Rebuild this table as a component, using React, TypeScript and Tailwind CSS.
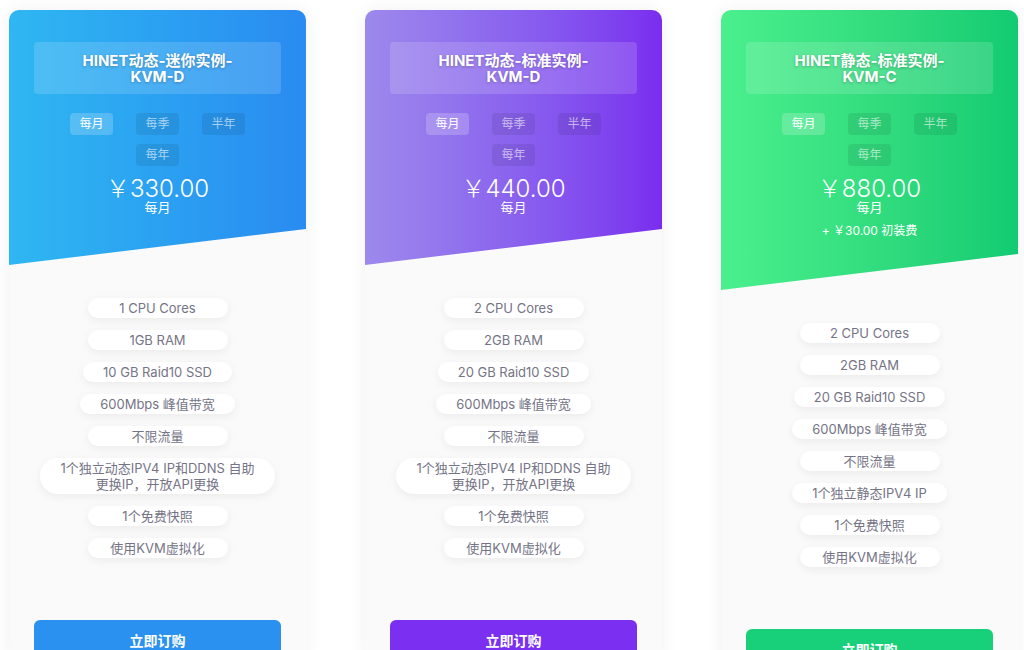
import React from 'react';

type Plan = {
  title: [string, string];
  price: string;
  setup?: string;
  from: string;
  to: string;
  btn: string;
  features: string[][];
};

const plans: Plan[] = [
  {
    title: ['HINET动态-迷你实例-', 'KVM-D'],
    price: '330.00',
    from: 'from-[#2fb7f2]',
    to: 'to-[#2a8bf0]',
    btn: 'bg-[#2b91f0]',
    features: [
      ['1 CPU Cores'],
      ['1GB RAM'],
      ['10 GB Raid10 SSD'],
      ['600Mbps 峰值带宽'],
      ['不限流量'],
      ['1个独立动态IPV4 IP和DDNS 自助', '更换IP，开放API更换'],
      ['1个免费快照'],
      ['使用KVM虚拟化'],
    ],
  },
  {
    title: ['HINET动态-标准实例-', 'KVM-D'],
    price: '440.00',
    from: 'from-[#9d89ec]',
    to: 'to-[#7a2cef]',
    btn: 'bg-[#7b2ff0]',
    features: [
      ['2 CPU Cores'],
      ['2GB RAM'],
      ['20 GB Raid10 SSD'],
      ['600Mbps 峰值带宽'],
      ['不限流量'],
      ['1个独立动态IPV4 IP和DDNS 自助', '更换IP，开放API更换'],
      ['1个免费快照'],
      ['使用KVM虚拟化'],
    ],
  },
  {
    title: ['HINET静态-标准实例-', 'KVM-C'],
    price: '880.00',
    setup: '+ ￥30.00 初装费',
    from: 'from-[#4af08c]',
    to: 'to-[#11cb72]',
    btn: 'bg-[#19d07a]',
    features: [
      ['2 CPU Cores'],
      ['2GB RAM'],
      ['20 GB Raid10 SSD'],
      ['600Mbps 峰值带宽'],
      ['不限流量'],
      ['1个独立静态IPV4 IP'],
      ['1个免费快照'],
      ['使用KVM虚拟化'],
    ],
  },
];

const periods = ['每月', '每季', '半年', '每年'];

function PlanCard({ plan }: { plan: Plan }) {
  return (
    <div className="w-[297px] shrink-0 rounded-t-[10px] overflow-hidden bg-[#fafafa] shadow-[0_0_18px_rgba(0,0,0,0.06)]">
      {/* Header */}
      <div
        className={`bg-linear-to-r ${plan.from} ${plan.to} px-[25px] pt-[32px] pb-[51px] [clip-path:polygon(0_0,100%_0,100%_calc(100%_-_36px),0_100%)]`}
      >
        <div className="rounded-[4px] bg-white/15 pt-[11px] pb-[9px] text-center text-[15px] font-bold leading-[16px] text-white [text-shadow:0_1px_3px_rgba(0,0,0,0.25)]">
          <div>{plan.title[0]}</div>
          <div>{plan.title[1]}</div>
        </div>
        <div className="mx-auto mt-[19px] flex w-[200px] flex-wrap justify-center gap-x-[23px] gap-y-[9px]">
          {periods.map((p, i) => (
            <div
              key={p}
              className={`flex h-[22px] w-[43px] items-center justify-center rounded-[4px] text-[12px] ${
                i === 0 ? 'bg-white/20 text-white' : 'bg-black/[0.08] text-white/60'
              }`}
            >
              {p}
            </div>
          ))}
        </div>
        <div className="mt-[12px] text-center text-[24px] font-light leading-[22px] text-white">
          ￥{plan.price}
        </div>
        <div className="text-center text-[13px] leading-[14px] text-white">每月</div>
        {plan.setup && (
          <div className="mt-[9px] text-center text-[12px] leading-[16px] text-white">{plan.setup}</div>
        )}
      </div>

      {/* Features */}
      <div className="flex flex-col items-center gap-[12px] pt-[33px]">
        {plan.features.map((f, i) => (
          <div
            key={i}
            className="min-w-[140px] rounded-full bg-white px-[20px] py-[2px] text-center text-[13px] leading-[16px] text-[#757486] shadow-[0_3px_10px_rgba(0,0,0,0.06)]"
          >
            {f.map((line) => (
              <div key={line} className="whitespace-nowrap">
                {line}
              </div>
            ))}
          </div>
        ))}
      </div>

      {/* Button */}
      <div className="px-[25px] pt-[62px]">
        <button className={`h-[40px] w-full rounded-[6px] ${plan.btn} text-[14px] font-bold text-white`}>
          立即订购
        </button>
      </div>
    </div>
  );
}

export default function App() {
  return (
    <div
      className="h-[650px] overflow-hidden bg-white"
      style={{ fontFamily: 'Inter, "Noto Sans CJK SC", sans-serif' }}
    >
      <div className="flex items-start gap-[59px] pl-[9px] pt-[10px]">
        {plans.map((p) => (
          <PlanCard key={p.price} plan={p} />
        ))}
      </div>
    </div>
  );
}
